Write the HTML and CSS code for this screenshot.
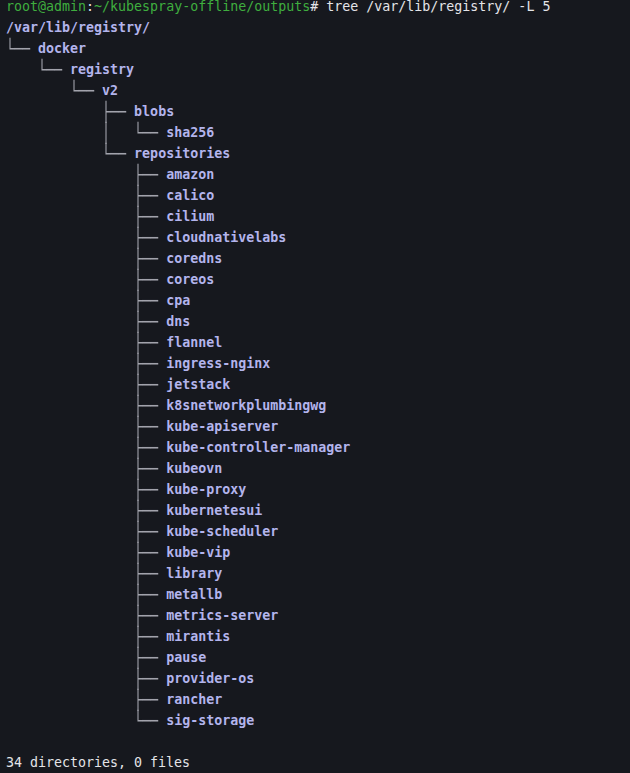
FILE: index.html
```html
<!DOCTYPE html>
<html>
<head>
<meta charset="utf-8">
<link rel="stylesheet" href="styles.css">
</head>
<body>
<pre class="term"><span class="user">root@admin</span>:<span class="path">~/kubespray-offline/outputs</span># tree /var/lib/registry/ -L 5
<span class="dir">/var/lib/registry/</span>
<span class="ln">└──</span> <span class="dir">docker</span>
<span class="ln">    └──</span> <span class="dir">registry</span>
<span class="ln">        └──</span> <span class="dir">v2</span>
<span class="ln">            ├──</span> <span class="dir">blobs</span>
<span class="ln">            │   └──</span> <span class="dir">sha256</span>
<span class="ln">            └──</span> <span class="dir">repositories</span>
<span class="ln">                ├──</span> <span class="dir">amazon</span>
<span class="ln">                ├──</span> <span class="dir">calico</span>
<span class="ln">                ├──</span> <span class="dir">cilium</span>
<span class="ln">                ├──</span> <span class="dir">cloudnativelabs</span>
<span class="ln">                ├──</span> <span class="dir">coredns</span>
<span class="ln">                ├──</span> <span class="dir">coreos</span>
<span class="ln">                ├──</span> <span class="dir">cpa</span>
<span class="ln">                ├──</span> <span class="dir">dns</span>
<span class="ln">                ├──</span> <span class="dir">flannel</span>
<span class="ln">                ├──</span> <span class="dir">ingress-nginx</span>
<span class="ln">                ├──</span> <span class="dir">jetstack</span>
<span class="ln">                ├──</span> <span class="dir">k8snetworkplumbingwg</span>
<span class="ln">                ├──</span> <span class="dir">kube-apiserver</span>
<span class="ln">                ├──</span> <span class="dir">kube-controller-manager</span>
<span class="ln">                ├──</span> <span class="dir">kubeovn</span>
<span class="ln">                ├──</span> <span class="dir">kube-proxy</span>
<span class="ln">                ├──</span> <span class="dir">kubernetesui</span>
<span class="ln">                ├──</span> <span class="dir">kube-scheduler</span>
<span class="ln">                ├──</span> <span class="dir">kube-vip</span>
<span class="ln">                ├──</span> <span class="dir">library</span>
<span class="ln">                ├──</span> <span class="dir">metallb</span>
<span class="ln">                ├──</span> <span class="dir">metrics-server</span>
<span class="ln">                ├──</span> <span class="dir">mirantis</span>
<span class="ln">                ├──</span> <span class="dir">pause</span>
<span class="ln">                ├──</span> <span class="dir">provider-os</span>
<span class="ln">                ├──</span> <span class="dir">rancher</span>
<span class="ln">                └──</span> <span class="dir">sig-storage</span>

34 directories, 0 files</pre>
</body>
</html>
```
FILE: styles.css
```css
html, body {
  margin: 0;
  padding: 0;
  background: #16181e;
  height: 100%;
  overflow: hidden;
}
.term {
  margin: -4px 0 0 0;
  padding: 0 0 0 6px;
  font-family: "DejaVu Sans Mono", "Liberation Mono", monospace;
  font-size: 13.3px;
  line-height: 21px;
  color: #e4e4e8;
  white-space: pre;
}
.user, .path {
  color: #3fae3f;
}
.dir {
  color: #b3b4ec;
  font-weight: bold;
}
.ln {
  display: inline-block;
  color: #a2a3ac;
  transform: scaleY(1.4);
  will-change: transform;
}
```
